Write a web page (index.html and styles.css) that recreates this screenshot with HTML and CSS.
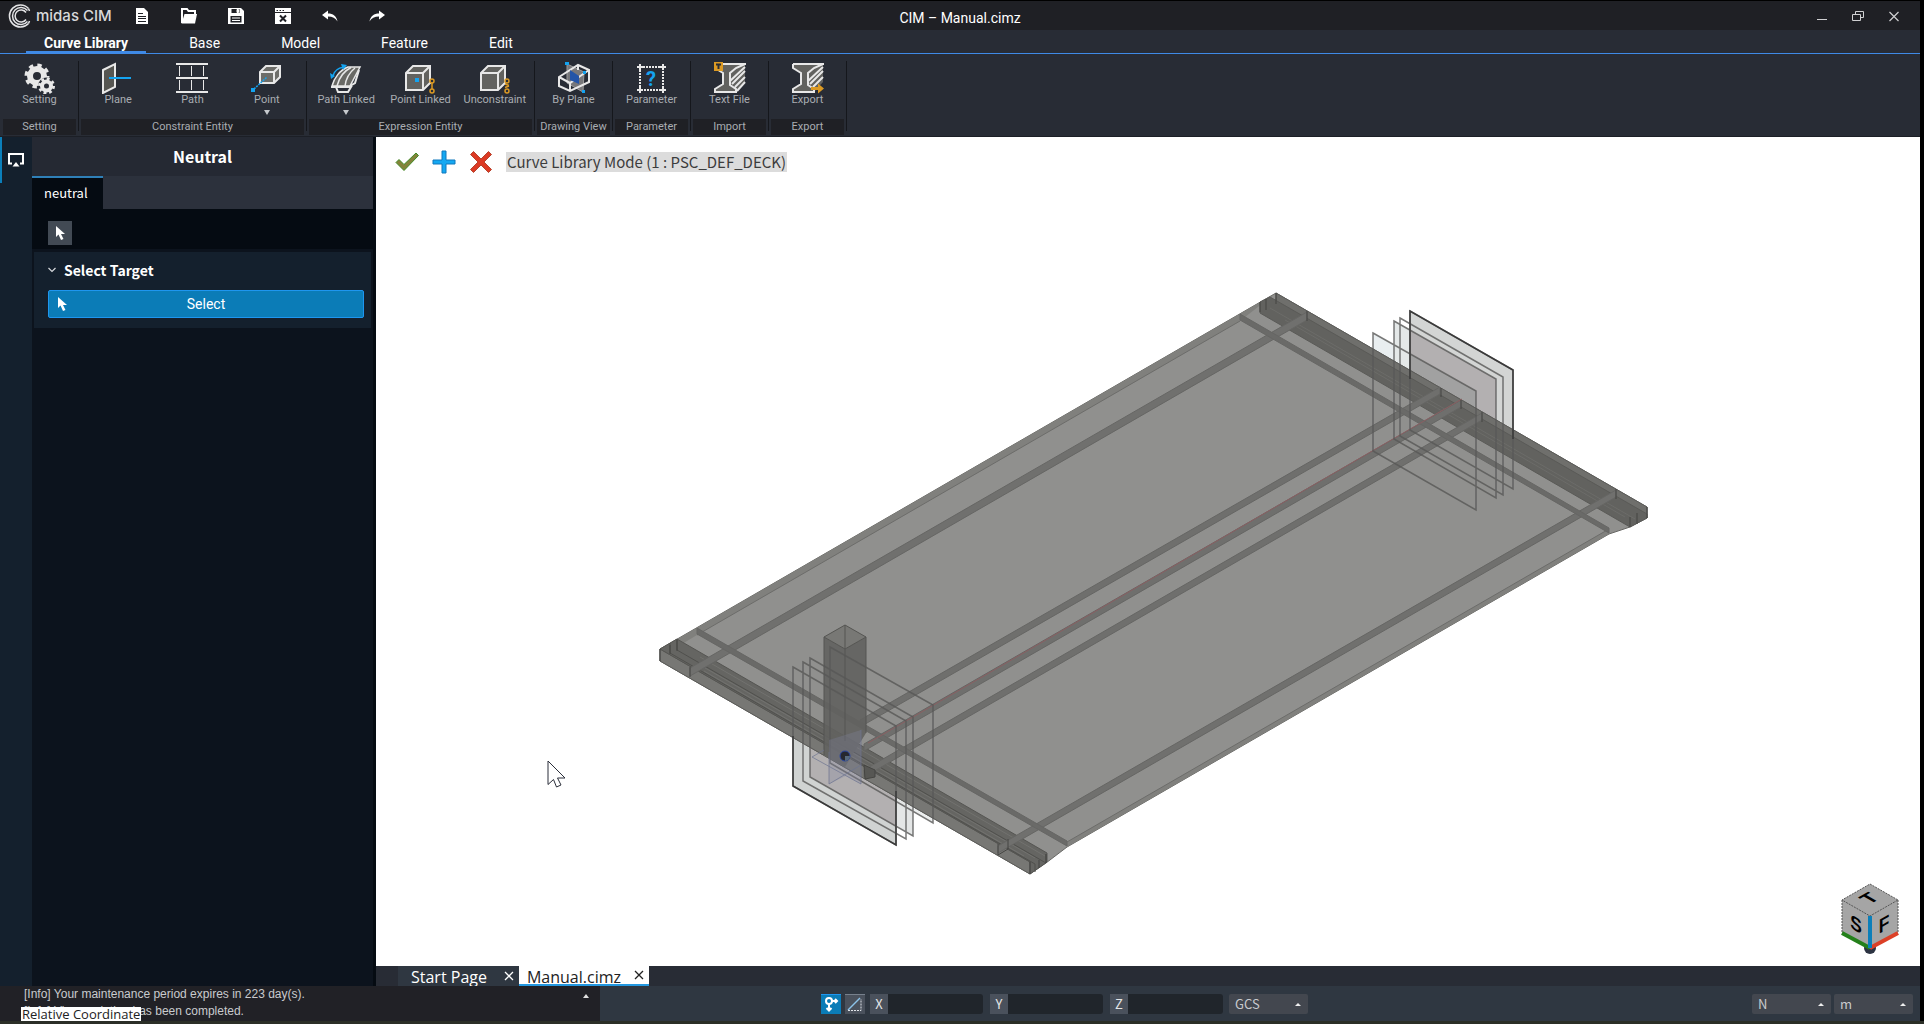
FILE: index.html
```
<!DOCTYPE html>
<html lang="en">
<head>
  <meta charset="UTF-8" />
  <meta name="viewport" content="width=device-width, initial-scale=1.0"/>
  <title>CIM – Manual.cimz</title>
  <link rel="stylesheet" href="styles.css">
</head>
<body>
  <header class="titlebar">
    <div class="brand">
      <svg width="24" height="24" viewBox="0 0 24 24" fill="none" stroke="#e4e4e6" stroke-width="1.500">
        <path d="M20.500 4.500A11 11 0 1 0 20.500 19.500"/>
        <path d="M19.500 6.500A8.500 8.500 0 1 0 19.500 17.500"/>
        <path d="M18 8.500A6 6 0 1 0 18 15.500"/>
        <path d="M20.500 4.500L21.500 7M20.500 19.500L21.500 17"/>
      </svg>
      <span>midas CIM</span>
    </div>
    <nav class="quick">
      <button aria-label="New"><svg width="16" height="16" viewBox="0 0 16 16"><path d="M2 0h8l4 4v12H2z" fill="#fff"/><path d="M4 5.500h5M4 8.500h8M4 10.500h8M4 13.500h8" stroke="#1f2025"/></svg></button>
      <button aria-label="Open"><svg width="16" height="16" viewBox="0 0 16 16"><path d="M1 15V1h5l1.500 2H14v3" fill="none" stroke="#fff" stroke-width="2"/><path d="M3.500 6H16l-2 9.500H.5z" fill="#fff"/></svg></button>
      <button aria-label="Save"><svg width="16" height="16" viewBox="0 0 16 16"><path d="M0 0h13l3 3v13H0z" fill="#fff"/><path d="M3.500 1h8v4h-8zM2.500 8h11v6.500h-11z" fill="#1f2025"/><path d="M9 1.500h1.500v3H9zM4 10h8M4 12.500h8" fill="#fff" stroke="#fff"/></svg></button>
      <button aria-label="Close file"><svg width="16" height="16" viewBox="0 0 16 16"><path d="M0 0h16v16H0z" fill="#fff"/><path d="M0 4.500h16M1.500 2.500h1.500M4.500 2.500h1.500M7.500 2.500H9" stroke="#1f2025"/><path d="M5 7.500l6 6M11 7.500l-6 6" stroke="#1f2025" stroke-width="2"/></svg></button>
      <button aria-label="Undo"><svg width="16" height="16" viewBox="0 0 16 16"><path d="M0 7l6-4.500v3c5 0 8.500 2.500 9.500 8C13.500 10 10.500 8.500 6 8.500v3z" fill="#fff"/></svg></button>
      <button aria-label="Redo"><svg width="16" height="16" viewBox="0 0 16 16"><path d="M16 7l-6-4.500v3C5 5.500 1.500 8 .5 13.500 2.500 10 5.500 8.500 10 8.500v3z" fill="#fff"/></svg></button>
    </nav>
    <div class="window-title">CIM – Manual.cimz</div>
    <div class="window-buttons">
      <button aria-label="Minimize"><svg width="12" height="12" viewBox="0 0 12 12"><path d="M1 9.500h10" stroke="#d0d0d2"/></svg></button>
      <button aria-label="Restore"><svg width="12" height="12" viewBox="0 0 12 12" fill="none" stroke="#d0d0d2"><path d="M3.500 4V1.500h8v6H9M.5 4.500h8v6h-8z"/></svg></button>
      <button aria-label="Close"><svg width="12" height="12" viewBox="0 0 12 12"><path d="M1.500 2l9 9M10.500 2l-9 9" stroke="#d0d0d2" stroke-width="1.200"/></svg></button>
    </div>
  </header>

  <nav class="tabs">
    <a href="#" class="active">Curve Library</a>
    <a href="#">Base</a>
    <a href="#">Model</a>
    <a href="#">Feature</a>
    <a href="#">Edit</a>
  </nav>

  <section class="ribbon">
    <div class="group">
      <div class="tools">
        <button class="tool">
          <svg width="32" height="32" viewBox="0 0 32 32">
            <g fill="none" stroke="#e8e8e8">
              <circle cx="13" cy="14" r="7" stroke-width="6"/>
              <circle cx="13" cy="14" r="10.500" stroke-width="4" stroke-dasharray="4.200 4.050"/>
              <circle cx="22.500" cy="24" r="6" fill="#282c35" stroke="#282c35" stroke-width="5"/>
              <circle cx="22.500" cy="24" r="4.500" stroke-width="4"/>
              <circle cx="22.500" cy="24" r="7" stroke-width="3" stroke-dasharray="2.800 2.698"/>
            </g>
          </svg>
          <span>Setting</span>
        </button>
      </div>
      <div class="group-name">Setting</div>
    </div>

    <div class="group wide">
      <div class="tools">
        <button class="tool">
          <svg width="32" height="32" viewBox="0 0 32 32">
            <path d="M1 8L13 2v23L1 31z" fill="#565652" stroke="#e8e8e8" stroke-width="2"/>
            <path d="M7 16h22" stroke="#14a3f0" stroke-width="2"/>
          </svg>
          <span>Plane</span>
        </button>
        <button class="tool">
          <svg width="32" height="32" viewBox="0 0 32 32" stroke="#e8e8e8">
            <path d="M0 2h32M0 16h32M0 30h32" stroke-width="2"/>
            <path d="M3.500 4v10M15.500 4v10M27.500 4v10M3.500 18v10M15.500 18v10M27.500 18v10"/>
          </svg>
          <span>Path</span>
        </button>
        <button class="tool">
          <svg width="32" height="32" viewBox="0 0 32 32">
            <path d="M9 10l6-6h14v11l-6 6H9z" fill="#6d6d69" stroke="#e8e8e8" stroke-width="2"/>
            <path d="M9 10h14v11M23 10l6-6" fill="none" stroke="#e8e8e8" stroke-width="2"/>
            <path d="M3 27l13-12" stroke="#14a3f0" stroke-width="1.500" stroke-dasharray="2 1"/>
            <path d="M0 26h4v4H0z" fill="#14a3f0"/>
          </svg>
          <span>Point</span>
          <i class="more"></i>
        </button>
      </div>
      <div class="group-name">Constraint Entity</div>
    </div>

    <div class="group wide">
      <div class="tools">
        <button class="tool">
          <svg width="32" height="32" viewBox="0 0 32 32">
            <path d="M18 5h12L20 24H2C4 16 10 8 18 5z" fill="#696965" stroke="#e8e8e8" stroke-width="1.500"/>
            <path d="M7 24C9 16 14 9 21 5.500M15 24c1-8 5-14 10-18" fill="none" stroke="#e8e8e8" stroke-width="1.500"/>
            <path d="M1 25h20l-3 5H8l-2-5M20 24l5-3 4-13" fill="none" stroke="#e8e8e8" stroke-width="2"/>
            <path d="M3 14C4 9 8 6 14 5" fill="none" stroke="#14a3f0" stroke-width="1.500"/>
            <path d="M0 11l1 6 4-3zM11 2l6 1-4 5z" fill="#14a3f0"/>
          </svg>
          <span>Path Linked</span>
          <i class="more"></i>
        </button>
        <button class="tool">
          <svg width="32" height="32" viewBox="0 0 32 32">
            <path d="M2 11l7-7h17v17l-7 7H2z" fill="#62625f" stroke="#e8e8e8" stroke-width="2"/>
            <path d="M2 11h17v17M19 11l7-7" fill="none" stroke="#e8e8e8" stroke-width="2"/>
            <path d="M11 16h4v4h-4z" fill="#14a3f0"/>
            <g fill="#282c35" stroke="#dc9a23" stroke-width="1.500"><path d="M28 19v10"/><circle cx="28" cy="19" r="2"/><circle cx="28" cy="29" r="2"/></g>
          </svg>
          <span>Point Linked</span>
        </button>
        <button class="tool">
          <svg width="32" height="32" viewBox="0 0 32 32">
            <path d="M2 11l7-7h17v17l-7 7H2z" fill="#62625f" stroke="#e8e8e8" stroke-width="2"/>
            <path d="M2 11h17v17M19 11l7-7" fill="none" stroke="#e8e8e8" stroke-width="2"/>
            <g fill="#282c35" stroke="#dc9a23" stroke-width="1.500"><circle cx="28" cy="19" r="2"/><circle cx="28" cy="29" r="2"/><path d="M26 22l4 1.500M26 25.500l4-1.500"/></g>
          </svg>
          <span>Unconstraint</span>
        </button>
      </div>
      <div class="group-name">Expression Entity</div>
    </div>

    <div class="group">
      <div class="tools">
        <button class="tool">
          <svg width="32" height="32" viewBox="0 0 32 32" fill="none">
            <path d="M9 2l17 8-1 20-16-9z" fill="#77777a" stroke="#9b9b9b"/>
            <path d="M1 15l19-12 11 5v12L12 29 1 24zM1 15l11 6 19-13M12 21v8M20 3v5" stroke="#e8e8e8" stroke-width="2"/>
            <path d="M12 8l9 6v8l-9-4z" fill="#2455a8"/>
            <path d="M7 0h4v3H7zM25 9h3v3h-3zM24 28h3v3h-3z" fill="#14a3f0"/>
          </svg>
          <span>By Plane</span>
        </button>
      </div>
      <div class="group-name">Drawing View</div>
    </div>

    <div class="group">
      <div class="tools">
        <button class="tool">
          <svg width="32" height="32" viewBox="0 0 32 32">
            <path d="M4 5h23v23H4z" fill="none" stroke="#e8e8e8" stroke-width="2" stroke-dasharray="2 1"/>
            <path d="M4 2v6M1 5h6M27 2v6M24 5h6M4 25v6M1 28h6M27 25v6M24 28h6" stroke="#e8e8e8" stroke-width="2"/>
            <text x="15" y="24" class="mark">?</text>
          </svg>
          <span>Parameter</span>
        </button>
      </div>
      <div class="group-name">Parameter</div>
    </div>

    <div class="group">
      <div class="tools">
        <button class="tool">
          <svg width="32" height="32" viewBox="0 0 32 32">
            <path d="M1 2h30v18l-9 10H1v-3l8-5V10L1 6z" fill="#62625f"/>
            <path d="M1 2h31M1 2v4l8 5v11l-8 5v3h21v-3l-6-4V11l6-5 9-4M16 19L31 5M18 22l13-13M21 25l10-10M23 29l8-9" fill="none" stroke="#e8e8e8" stroke-width="2"/>
            <path d="M0 0h9v9H0z" fill="#dc9a23"/>
            <path d="M2 2.500h5M4.500 2v5" stroke="#282c35" stroke-width="2"/>
          </svg>
          <span>Text File</span>
        </button>
      </div>
      <div class="group-name">Import</div>
    </div>

    <div class="group last">
      <div class="tools">
        <button class="tool">
          <svg width="32" height="32" viewBox="0 0 32 32">
            <path d="M1 2h30v18l-9 10H1v-3l8-5V10L1 6z" fill="#62625f"/>
            <path d="M1 2h31M1 2v4l8 5v11l-8 5v3h21v-3l-6-4V11l6-5 9-4M16 19L31 5M18 22l13-13M21 25l10-10" fill="none" stroke="#e8e8e8" stroke-width="2"/>
            <path d="M19 25h7v-3.500l6 5-6 5V28h-7z" fill="#dc9a23"/>
          </svg>
          <span>Export</span>
        </button>
      </div>
      <div class="group-name">Export</div>
    </div>
  </section>

  <main class="work">
    <aside class="rail">
      <button aria-label="Display panel">
        <svg width="16" height="14" viewBox="0 0 16 14"><path d="M4 10.500H1V1h14v9.500h-3" fill="none" stroke="#fff" stroke-width="2"/><path d="M8 9l3.500 4.500h-7z" fill="#fff"/></svg>
      </button>
    </aside>

    <aside class="panel">
      <h1>Neutral</h1>
      <div class="panel-tabs"><a href="#">neutral</a></div>
      <div class="panel-tools">
        <button aria-label="Pick"><svg width="10" height="14" viewBox="0 0 10 14"><path d="M0 0v11l2.500-2.500L5 14l2.500-1-2.500-5H9z" fill="#fff"/></svg></button>
      </div>
      <section class="target">
        <h2><svg width="8" height="6" viewBox="0 0 8 6"><path d="M.5 1L4 4.500 7.500 1" fill="none" stroke="#d5d8dc" stroke-width="1.200"/></svg>Select Target</h2>
        <button class="select-btn"><svg width="10" height="14" viewBox="0 0 10 14"><path d="M0 0v11l2.500-2.500L5 14l2.500-1-2.500-5H9z" fill="#fff"/></svg>Select</button>
      </section>
    </aside>

    <section class="stage">
      <div class="canvas">
        <svg class="scene" viewBox="376 137 1544 829">
          <!-- section planes, parts standing clear of the deck -->
          <path d="M1373 333l103 58v119l-103-59z" fill="#e9eef0"/>
          <path d="M1394 321l109 56v118l-109-56z" fill="#e4e8e8"/>
          <path d="M1410 311l103 59v119l-103-59z" fill="#d3d5d4"/>
          <path d="M1410 330l86 49v100l-86-49z" fill="#b3b0b1"/>
          <path d="M1410 354l66 37v80l-66-37z" fill="#a1a1a1"/>
          <path d="M830 647l103 58v118l-103-60z" fill="#eceeee"/>
          <path d="M810 658l103 59v119l-103-59z" fill="#e4e6e6"/>
          <path d="M793 667l103 59v119l-103-59z" fill="#d0d3d2"/>
          <path d="M810 677l86 49v101l-86-50z" fill="#b3b0b1"/>

          <!-- deck slab -->
          <path d="M660 649L1276 293 1647 507V518L1630 527 1609 534 1067 847 1046 863 1030 874 660 661z" fill="#90908e" stroke="#676764"/>
          <path d="M660 649L1276 293 1240 321 697 635 672 650z" fill="#80807d"/>
          <path d="M1067 842L1609 529v5L1067 847z" fill="#80807d"/>
          <path d="M697 635L1240 321M1067 842L1609 529" stroke="#6c6c6a"/>

          <!-- end beams -->
          <path d="M660 649v12l370 213v-12z" fill="#777774" stroke="#5c5c59"/>
          <path d="M660 649l17-10 370 214v9l-17 12v-12z" fill="#656562" stroke="#555552"/>
          <path d="M700 657l345 199M700 665l335 193M704 671l320 185" stroke="#72726f"/>
          <path d="M670 643v10l365 211v8M677 639v11l369 213v-9" fill="none" stroke="#50504d"/>
          <path d="M1276 293l371 214v11L1276 305z" fill="#6f6f6c" stroke="#5c5c59"/>
          <path d="M1260 302l10-5 377 217v4l-17 9-370-214z" fill="#62625f" stroke="#5a5a57"/>
          <path d="M1270 308l365 211M1285 320l340 197" stroke="#6c6c69"/>

          <!-- girders and cross beams -->
          <g stroke="#666664">
            <path d="M690 668L1307 312v8L690 676z" fill="#70706e"/>
            <path d="M860 720L1440 387v7L860 727z" fill="#6f6f6d"/>
            <path d="M864 744L1461 400v7L864 751z" fill="#6f6f6d"/>
            <path d="M864 770L1482 413v7L864 777z" fill="#6f6f6d"/>
            <path d="M998 846L1616 490v7L998 853z" fill="#70706e"/>
            <path d="M697 628L1067 841v5L697 634z" fill="#6a6a68"/>
            <path d="M1240 314L1609 528v5L1240 320z" fill="#6a6a68"/>
          </g>
          <path d="M868 743L1462 399" stroke="#8a5f62"/>
          <g fill="none" stroke="#454542">
            <path d="M690 667v10M998 844v11l10-6v-10M1030 862v12M1039 860v8M1046 854v9M660 649v12M670 645v9M677 640v11"/>
            <path d="M1276 293v11M1266 299v11M1260 302v10M1307 311v10M1441 388v9M1461 400v9M1482 412v10M1616 489v10M1647 507v11M1637 513v11M1630 517v10"/>
            <path d="M864 765l11 5v7l-10 2z" fill="#575754"/>
          </g>

          <!-- pier -->
          <path d="M824 637l21 12 21-12v96l-21 34-21-12z" fill="#62625f" opacity=".9"/>
          <path d="M845 625l21 12-21 12-21-12z" fill="#787875" stroke="#555552"/>
          <path d="M824 637v118M845 625v116M866 637v96" stroke="#555552"/>

          <!-- section outlines -->
          <g fill="none" stroke="#585856" stroke-opacity=".8" stroke-width="1.500">
            <path d="M1373 333l103 58v119l-103-59zM1394 321l102 58v119l-102-59zM1400 318l103 59v118l-103-59zM1410 311l103 59v119l-103-59z"/>
            <path d="M793 667l103 59v119l-103-59zM803 662l103 59v118l-103-58zM810 658l103 59v119l-103-59zM830 647l103 58v118l-103-60z"/>
          </g>
          <path d="M1410 379v-68l103 59v69M793 736v50l103 59v-54" fill="none" stroke="#3a3a3a" stroke-width="1.500"/>

          <!-- local axes -->
          <path d="M829 740l32-10v54l-15-8-17 8z" fill="#8084a0" opacity=".3"/>
          <path d="M829 784v-32M829 784l32-19M861 730v54L812 757l12-7" fill="none" stroke="#6c7390" stroke-opacity=".7"/>
          <circle cx="845" cy="756" r="5" fill="#26282e" stroke="#2b46a0"/>
          <path d="M845 756v5a5 5 0 0 0 5-5z" fill="#56697c"/>
        </svg>

        <div class="mode-bar">
          <button aria-label="Apply"><svg width="24" height="24" viewBox="0 0 24 24"><path d="M1 12.500l3-3 5 5L21 3l2.500 2.500L9 20.500z" fill="#84833a" stroke="#3f8a24"/></svg></button>
          <button aria-label="Add"><svg width="24" height="24" viewBox="0 0 24 24"><path d="M10 1h4v9h9v4h-9v9h-4v-9H1v-4h9z" fill="#14a8f2" stroke="#1179bd"/></svg></button>
          <button aria-label="Cancel"><svg width="24" height="24" viewBox="0 0 24 24"><path d="M4.500 1.500L12 9l7.500-7.500 3 3L15 12l7.500 7.500-3 3L12 15l-7.500 7.500-3-3L9 12 1.500 4.500z" fill="#dc3a24" stroke="#b5442e"/></svg></button>
          <span>Curve Library Mode (1 : PSC_DEF_DECK)</span>
        </div>

        <svg class="cube" width="60" height="72" viewBox="0 0 60 72">
          <circle cx="30" cy="65" r="6" fill="#2c3342"/>
          <path d="M30 1l28 16v33L30 66 2 50V17z" fill="#a5a5a5"/>
          <path d="M30 1l28 16-28 16L2 17zM2 17v33M58 17v33" fill="none" stroke="#555" stroke-dasharray="2 1"/>
          <path d="M2 50l28 15" stroke="#24801a" stroke-width="4"/>
          <path d="M58 50L30 65" stroke="#dc4027" stroke-width="4"/>
          <path d="M30 33v32" stroke="#0b7fba" stroke-width="4"/>
          <text transform="matrix(.87 -.5 .87 .5 29 15)" y="7">T</text>
          <text transform="matrix(.87 .5 0 1 16 48)">S</text>
          <text transform="matrix(.87 -.5 0 1 44 48)">F</text>
        </svg>

        <svg class="pointer" width="20" height="28" viewBox="0 0 20 28"><path d="M1 1v23.500l5.500-5L9.500 27l4.500-2-3.500-7H18z" fill="#fff" stroke="#2b2f3a"/></svg>
      </div>

      <nav class="doc-tabs">
        <div class="doc"><a href="#">Start Page</a><button aria-label="Close Start Page"><svg width="10" height="10" viewBox="0 0 10 10"><path d="M1 1l8 8M9 1L1 9" stroke="currentColor" stroke-width="1.300"/></svg></button></div>
        <div class="doc current"><a href="#">Manual.cimz</a><button aria-label="Close Manual.cimz"><svg width="10" height="10" viewBox="0 0 10 10"><path d="M1 1l8 8M9 1L1 9" stroke="currentColor" stroke-width="1.300"/></svg></button></div>
      </nav>
    </section>
  </main>

  <footer class="status">
    <div class="log">
      <p>[Info] Your maintenance period expires in 223 day(s).</p>
      <p>[Info] View updating has been completed.</p>
      <button class="up" aria-label="Expand log"></button>
      <div class="tip">Relative Coordinate</div>
    </div>
    <div class="coords">
      <button class="toggle on" aria-label="Relative coordinate"><svg width="16" height="16" viewBox="0 0 16 16" fill="none" stroke="#fff" stroke-width="2"><circle cx="6" cy="5" r="3"/><path d="M9 5h5M12 3l2 2-2 2M6 8v6M3.500 12L6 14.500 8.500 12"/></svg></button>
      <button class="toggle" aria-label="Angle"><svg width="16" height="16" viewBox="0 0 16 16" fill="none"><path d="M1 14L13 2" stroke="#8cc4ea" stroke-width="1.500"/><path d="M1 14.500h13V3" stroke="#dfe3e8" stroke-dasharray="2 1"/></svg></button>
      <div class="axis"><label for="x">X</label><input id="x" type="text"></div>
      <div class="axis"><label for="y">Y</label><input id="y" type="text"></div>
      <div class="axis"><label for="z">Z</label><input id="z" type="text"></div>
      <div class="drop"><select aria-label="Coordinate system"><option>GCS</option></select></div>
    </div>
    <div class="units">
      <div class="drop"><select aria-label="Force unit"><option>N</option></select></div>
      <div class="drop"><select aria-label="Length unit"><option>m</option></select></div>
    </div>
  </footer>
</body>
</html>
```
FILE: styles.css
```
* {
  box-sizing: border-box;
}
body {
  margin: 0;
  padding: 1px 4px 0 0;
  height: 100vh;
  display: flex;
  flex-direction: column;
  overflow: hidden;
  background-color: #000;
  border-bottom: 3px solid #2b2f27;
  color: #fff;
  font-family: Roboto, "Noto Sans CJK KR", sans-serif;
  font-size: 13px;
}
button {
  padding: 0;
  border: none;
  background: none;
  color: inherit;
  font: inherit;
  cursor: pointer;
}
a {
  color: inherit;
  text-decoration: none;
}
svg {
  display: block;
}
h1, h2, p {
  margin: 0;
}

/* title bar */
.titlebar {
  position: relative;
  display: flex;
  align-items: center;
  height: 29px;
  background-color: #1f2025;
}
.brand {
  display: flex;
  align-items: center;
  gap: 4px;
  width: 134px;
  padding-left: 8px;
  color: #d8d8da;
  font-family: Inter, sans-serif;
  font-size: 15px;
  font-weight: 500;
}
.quick {
  display: flex;
  gap: 31px;
}
.window-title {
  position: absolute;
  left: 0;
  right: 0;
  padding-top: 4px;
  text-align: center;
  font-size: 14px;
  pointer-events: none;
}
.window-buttons {
  display: flex;
  gap: 24px;
  margin-left: auto;
  padding-right: 20px;
}

/* menu tabs */
.tabs {
  display: flex;
  gap: 25px;
  height: 24px;
  padding-left: 26px;
  background-color: #282c35;
  border-bottom: 1px solid #3f8ae6;
  font-size: 14px;
  line-height: 26px;
}
.tabs a {
  height: 23px;
  padding: 0 18px;
}
.tabs .active {
  font-weight: bold;
  border-bottom: 2px solid #3f8ae6;
}

/* ribbon */
.ribbon {
  display: flex;
  height: 83px;
  background-color: #282c35;
  border-bottom: 1px solid #1c1f26;
  color: #a9adb2;
  font-size: 11px;
}
.group {
  position: relative;
  display: flex;
  flex-direction: column;
  width: 78px;
  padding: 0 2px 1px 3px;
}
.group.wide {
  width: 228px;
}
.group::after {
  content: "";
  position: absolute;
  top: 7px;
  right: -1px;
  bottom: 5px;
  width: 1px;
  background-color: #15171c;
}
.tools {
  flex: 1;
  display: flex;
}
.tool {
  flex: 1;
  display: flex;
  flex-direction: column;
  align-items: center;
  padding-top: 8px;
  line-height: 12px;
  white-space: nowrap;
}
.more {
  margin-top: 4px;
  border: 3px solid transparent;
  border-top: 5px solid #c6c9cd;
  border-bottom: none;
}
.group-name {
  height: 16px;
  line-height: 16px;
  background-color: #1f2025;
  text-align: center;
}
.mark {
  fill: #14a3f0;
  font: bold 20px Roboto, sans-serif;
  text-anchor: middle;
}

/* work area */
.work {
  flex: 1;
  display: flex;
  min-height: 0;
}
.rail {
  width: 32px;
  background-color: #14202d;
}
.rail button {
  display: flex;
  align-items: center;
  width: 32px;
  height: 46px;
  padding-left: 6px;
  border-left: 2px solid #0b7fba;
}
.panel {
  width: 344px;
  border-right: 3px solid #050b12;
  background-color: #0c131d;
}
.panel h1 {
  height: 39px;
  background-color: #252933;
  font-family: "Noto Sans CJK KR", sans-serif;
  font-size: 16px;
  font-weight: bold;
  line-height: 38px;
  text-align: center;
}
.panel-tabs {
  display: flex;
  height: 33px;
  background-color: #2c313c;
  font-family: "Noto Sans CJK KR", sans-serif;
}
.panel-tabs a {
  padding: 0 15px 0 12px;
  border-top: 2px solid #2f80b8;
  background-color: #050b12;
  line-height: 30px;
}
.panel-tools {
  height: 40px;
  padding: 12px 16px;
  background-color: #050b12;
}
.panel-tools button {
  width: 24px;
  height: 24px;
  padding: 0 0 0 8px;
  background-color: #424a54;
}
.target {
  margin: 3px 2px 0;
  padding: 7px 7px 10px 14px;
  background-color: #14202d;
}
.target h2 {
  display: flex;
  align-items: center;
  gap: 8px;
  height: 22px;
  margin-bottom: 9px;
  font-family: "Noto Sans CJK KR", sans-serif;
  font-size: 14px;
  font-weight: bold;
}
.select-btn {
  position: relative;
  width: 100%;
  height: 28px;
  border: 1px solid #1e96ef;
  border-radius: 2px;
  background-color: #0b7cb7;
  font-size: 14px;
}
.select-btn svg {
  position: absolute;
  left: 9px;
  top: 6px;
}
.stage {
  flex: 1;
  display: flex;
  flex-direction: column;
  min-width: 0;
}
.canvas {
  position: relative;
  flex: 1;
  min-height: 0;
  background-color: #fff;
}
.scene {
  width: 100%;
  height: 100%;
}
.mode-bar {
  position: absolute;
  left: 19px;
  top: 13px;
  display: flex;
  align-items: center;
  gap: 13px;
}
.mode-bar span {
  padding: 0 1px;
  background-color: #dcdcdc;
  color: #3c3c3c;
  font-family: "Noto Sans CJK KR", sans-serif;
  font-size: 15px;
  line-height: 20px;
}
.cube {
  position: absolute;
  right: 20px;
  bottom: 11px;
}
.cube text {
  font: bold 20px "Liberation Sans", sans-serif;
  text-anchor: middle;
}
.pointer {
  position: absolute;
  left: 171px;
  top: 623px;
}
.doc-tabs {
  display: flex;
  height: 20px;
  padding-left: 22px;
  background-color: #282c35;
  font-family: "Open Sans", sans-serif;
  font-size: 16px;
  line-height: 22px;
}
.doc {
  display: flex;
  gap: 17px;
  padding: 0 5px 0 13px;
  background-color: #2f3741;
  overflow: hidden;
}
.doc.current {
  gap: 13px;
  padding: 0 5px 0 8px;
  border-bottom: 2px solid #2398e0;
  background-color: #fff;
  color: #222;
}

/* status bar */
.status {
  display: flex;
  align-items: center;
  height: 35px;
  background-color: #2f3741;
}
.log {
  position: relative;
  width: 600px;
  height: 35px;
  padding-left: 24px;
  background-color: #212126;
  color: #c9cbce;
  font-family: "Liberation Sans", sans-serif;
  font-size: 12px;
  line-height: 17px;
}
.up {
  position: absolute;
  right: 11px;
  top: 8px;
  border: 3px solid transparent;
  border-bottom: 4px solid #e0e0e0;
  border-top: none;
}
.tip {
  position: absolute;
  left: 21px;
  top: 21px;
  padding: 0 1px;
  background-color: #fff;
  color: #222;
  font-family: "Open Sans", sans-serif;
  font-size: 13px;
  line-height: 14px;
}
.coords {
  display: flex;
  gap: 6px;
  margin-left: 221px;
}
.toggle {
  width: 20px;
  height: 20px;
  padding-left: 2px;
  border-top: 1px solid #77808c;
  background-color: #4a515c;
}
.toggle.on {
  margin-right: -2px;
  background-color: #0b7cb7;
  border-color: #1e96ef;
}
.axis {
  display: flex;
  height: 20px;
  margin-left: -1px;
}
.axis + .axis {
  margin-left: 1px;
}
.axis label {
  width: 18px;
  background-color: #4a515c;
  color: #e4e6e8;
  font-family: "Noto Sans CJK KR", sans-serif;
  line-height: 20px;
  text-align: center;
}
.axis input {
  width: 95px;
  padding: 0 4px;
  border: none;
  border-radius: 0 3px 3px 0;
  background-color: #20252b;
  color: #fff;
}
.drop {
  position: relative;
}
.drop::after {
  content: "";
  position: absolute;
  right: 7px;
  top: 9px;
  border: 3px solid transparent;
  border-bottom: 3px solid #eee;
  border-top: none;
}
.drop select {
  width: 79px;
  height: 20px;
  padding: 0 6px;
  appearance: none;
  border: none;
  border-radius: 2px;
  background-color: #43474f;
  color: #c9cbce;
  font-family: "Noto Sans CJK KR", sans-serif;
  font-size: 13px;
}
.units {
  display: flex;
  gap: 3px;
  margin-left: auto;
  padding-right: 7px;
}
```
